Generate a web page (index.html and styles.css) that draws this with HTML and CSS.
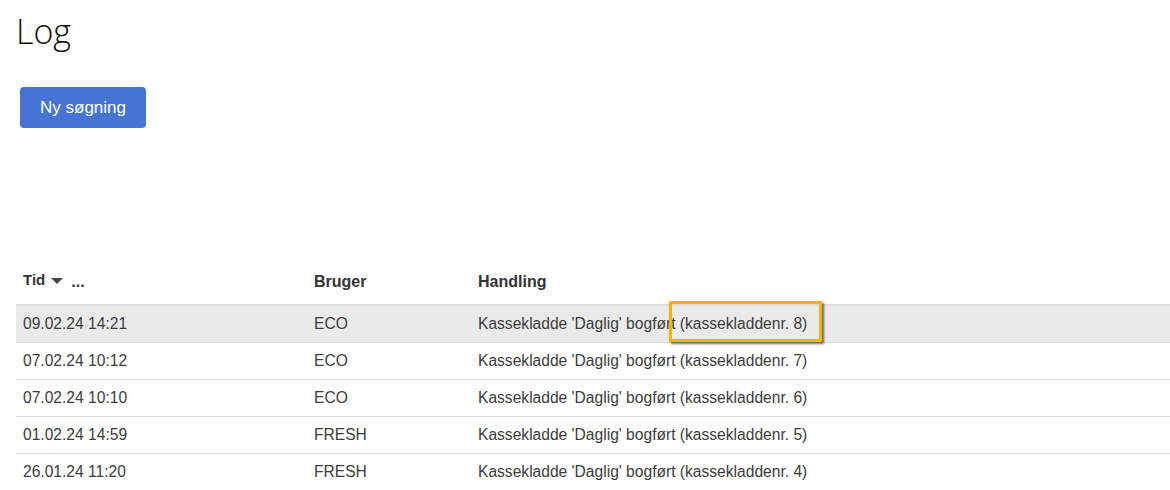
FILE: index.html
```html
<!DOCTYPE html>
<html lang="da">
<head>
<meta charset="utf-8">
<title>Log</title>
<link rel="stylesheet" href="styles.css">
</head>
<body>
<div class="page">
  <h1 class="title">Log</h1>
  <button class="btn-primary" type="button">Ny søgning</button>
  <table class="log-table">
    <colgroup>
      <col class="col-time">
      <col class="col-user">
      <col class="col-action">
    </colgroup>
    <thead>
      <tr>
        <th class="th-sort"><span class="sort-label">Tid</span><span class="caret"></span><span class="dots">...</span></th>
        <th>Bruger</th>
        <th>Handling</th>
      </tr>
    </thead>
    <tbody>
      <tr class="row-active">
        <td>09.02.24 14:21</td>
        <td>ECO</td>
        <td class="cell-action">Kassekladde 'Daglig' bogført (kassekladdenr. 8)<span class="highlight"></span></td>
      </tr>
      <tr>
        <td>07.02.24 10:12</td>
        <td>ECO</td>
        <td>Kassekladde 'Daglig' bogført (kassekladdenr. 7)</td>
      </tr>
      <tr>
        <td>07.02.24 10:10</td>
        <td>ECO</td>
        <td>Kassekladde 'Daglig' bogført (kassekladdenr. 6)</td>
      </tr>
      <tr>
        <td>01.02.24 14:59</td>
        <td>FRESH</td>
        <td>Kassekladde 'Daglig' bogført (kassekladdenr. 5)</td>
      </tr>
      <tr>
        <td>26.01.24 11:20</td>
        <td>FRESH</td>
        <td>Kassekladde 'Daglig' bogført (kassekladdenr. 4)</td>
      </tr>
    </tbody>
  </table>
</div>
</body>
</html>
```

FILE: styles.css
```css
html, body {
  margin: 0;
  padding: 0;
  background: #ffffff;
}

body {
  font-family: "Liberation Sans", Arial, sans-serif;
  color: #333333;
  overflow: hidden;
}

.page {
  padding-left: 16px;
}

.title {
  font-family: "Open Sans", "Liberation Sans", sans-serif;
  font-weight: 300;
  font-size: 34px;
  line-height: 40px;
  color: #111111;
  margin: 11px 0 0 0;
}

.btn-primary {
  display: block;
  margin: 36px 0 0 4px;
  height: 41px;
  padding: 0 20px;
  border: 0;
  border-radius: 4px;
  background: #4674d4;
  color: #ffffff;
  font-family: "Liberation Sans", Arial, sans-serif;
  font-size: 17px;
  line-height: 41px;
}

.log-table {
  margin-top: 136px;
  width: 1154px;
  border-collapse: collapse;
  table-layout: fixed;
}

.col-time { width: 291px; }
.col-user { width: 164px; }

.log-table th {
  text-align: left;
  font-size: 16px;
  font-weight: bold;
  color: #333333;
  line-height: 20px;
  padding: 8px 7px 12px 7px;
  border-bottom: 2px solid #dddddd;
}

.th-sort {
  white-space: nowrap;
}

.sort-label {
  font-size: 15px;
  position: relative;
  top: -2px;
}

.caret {
  display: inline-block;
  width: 0;
  height: 0;
  margin: 0 8px 0 6px;
  border-left: 6px solid transparent;
  border-right: 6px solid transparent;
  border-top: 6px solid #444444;
  vertical-align: 3px;
}

.dots {
  font-size: 16px;
  letter-spacing: 0;
}

.log-table td {
  font-size: 15.6px;
  line-height: 20px;
  padding: 8px 7px;
  color: #3c3c3c;
  border-bottom: 1px solid #dddddd;
  white-space: nowrap;
}

.row-active td {
  background: #eaeaea;
}

.cell-action {
  position: relative;
}

.highlight {
  position: absolute;
  left: 198px;
  top: -5px;
  width: 147px;
  height: 35px;
  border: 3px solid #f5b400;
  box-shadow: 2px 2px 2px rgba(0, 0, 0, 0.55);
}
```
